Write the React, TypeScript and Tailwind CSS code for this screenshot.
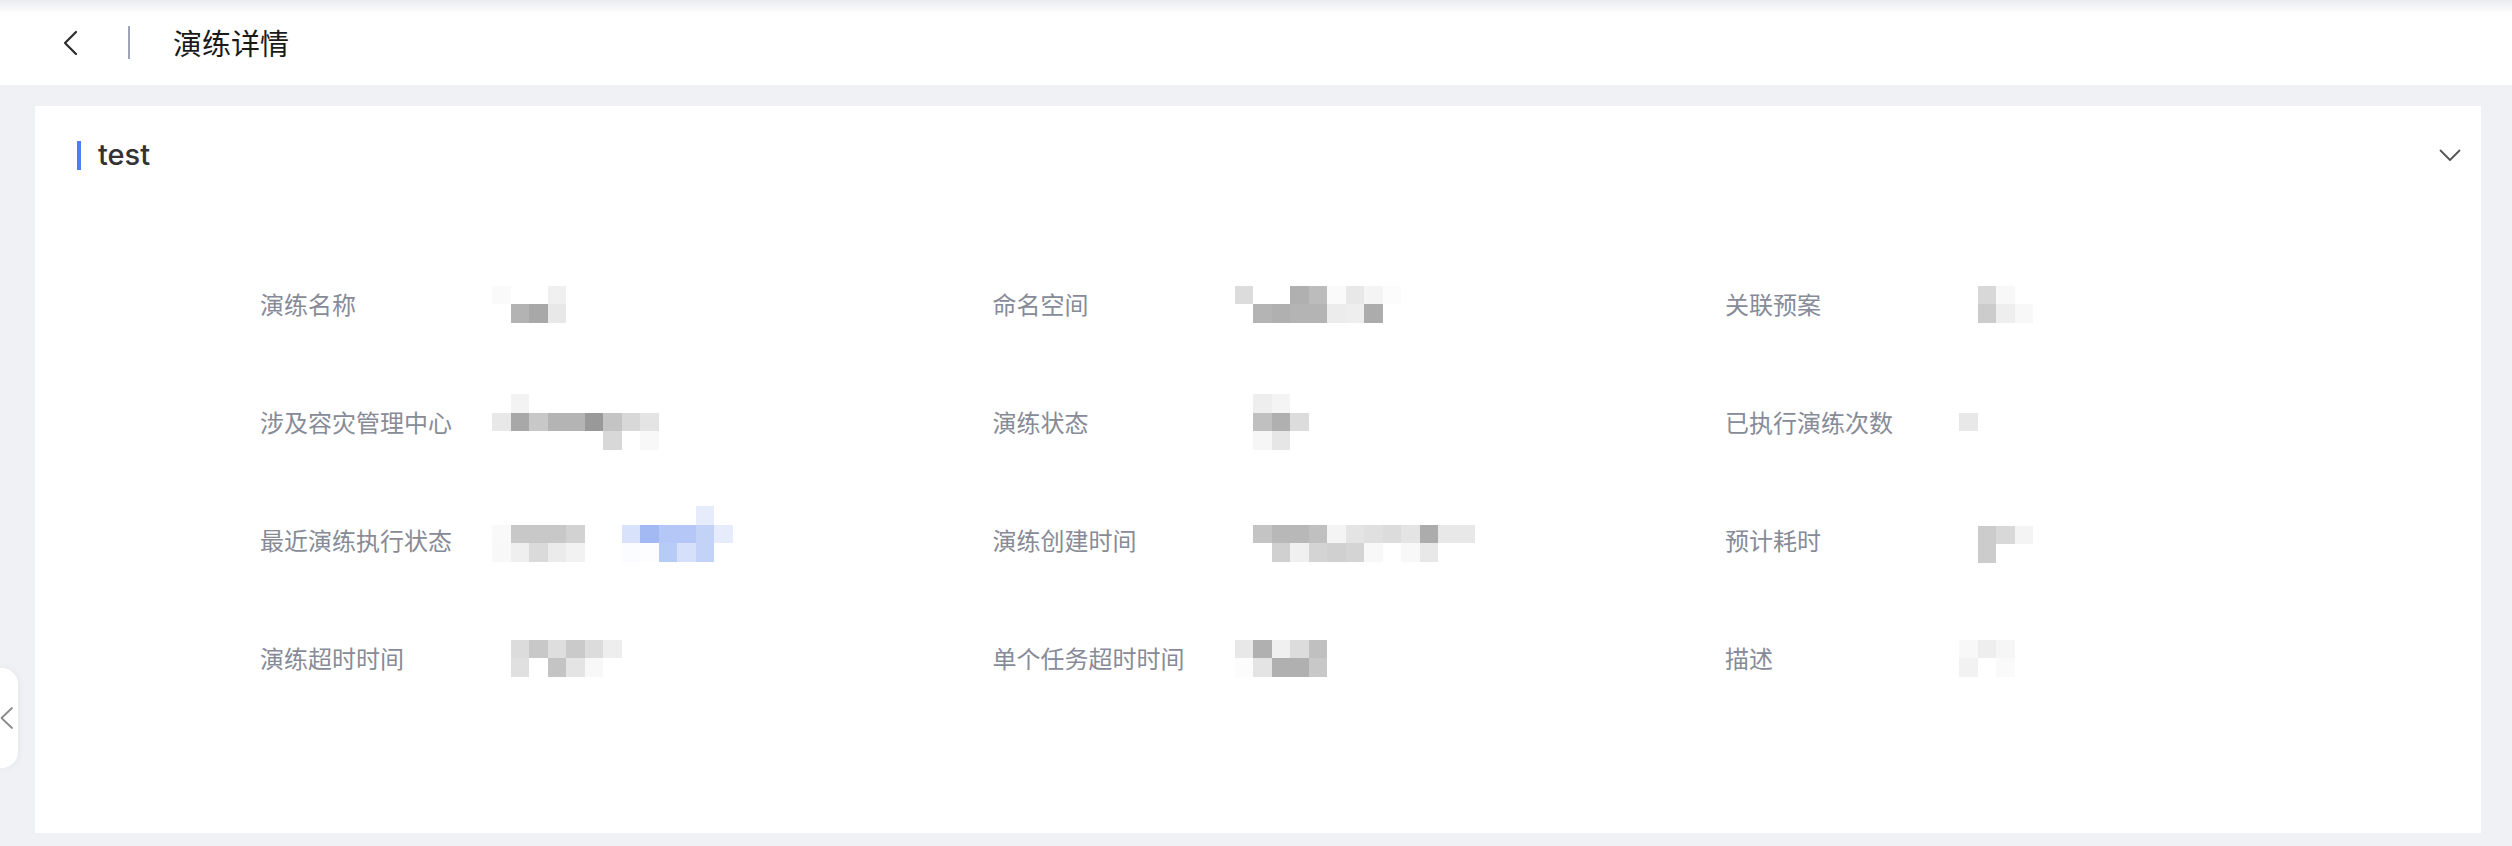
type Item = { label: string; shift: string; rows: string[][] };

const g = (v: string) => `#${v}${v}${v}`;

// mosaic blocks standing in for the redacted values
const items: Item[] = [
  {
    label: "演练名称",
    shift: "",
    rows: [
      [g("fa"), "", "", g("f0")],
      ["", g("b3"), g("a8"), g("e8")],
    ],
  },
  {
    label: "命名空间",
    shift: "ml-[10px]",
    rows: [
      [g("dc"), "", "", g("b0"), g("bc"), g("fa"), g("e8"), g("f4"), g("fc")],
      ["", g("b4"), g("b0"), g("b4"), g("b4"), g("ec"), g("ee"), g("ac")],
    ],
  },
  {
    label: "关联预案",
    shift: "ml-[2px]",
    rows: [
      ["", g("d8"), g("f8")],
      ["", g("cc"), g("ee"), g("f8")],
    ],
  },
  {
    label: "涉及容灾管理中心",
    shift: "",
    rows: [
      ["", g("f3")],
      [g("e8"), g("a8"), g("c8"), g("b4"), g("b4"), g("99"), g("c4"), g("d8"), g("e4")],
      ["", "", "", "", "", "", g("d8"), "", g("f8")],
    ],
  },
  {
    label: "演练状态",
    shift: "ml-[10px]",
    rows: [
      ["", g("ee"), g("f4")],
      ["", g("c0"), g("b0"), g("dc")],
      ["", g("f6"), g("e6")],
    ],
  },
  {
    label: "已执行演练次数",
    shift: "ml-[2px]",
    rows: [[g("e8")]],
  },
  {
    label: "最近演练执行状态",
    shift: "relative -top-[6px]",
    rows: [
      ["", "", "", "", "", "", "", "", "", "", "", "#e6ecfc"],
      [g("f9"), g("c8"), g("c8"), g("c8"), g("d2"), "", "", "#d9e2fb", "#a2b9f3", "#b5c7f6", "#b5c7f6", "#c3d2f7", "#e6ecfb"],
      [g("f8"), g("ef"), g("da"), g("eb"), g("f2"), "", "", "#fbfcff", "#fdfdff", "#b6cbf6", "#d6e0fa", "#c3d3f7"],
    ],
  },
  {
    label: "演练创建时间",
    shift: "ml-[10px] relative top-[3px]",
    rows: [
      ["", g("c4"), g("b8"), g("b8"), g("c0"), g("f4"), g("e4"), g("e0"), g("dc"), g("e4"), g("ac"), g("e8"), g("e8")],
      ["", "", g("d0"), g("f0"), g("d4"), g("d0"), g("d4"), g("f8"), "", g("f8"), g("e8")],
    ],
  },
  {
    label: "预计耗时",
    shift: "ml-[2px] relative top-[4px]",
    rows: [
      ["", g("cc"), g("d8"), g("f4")],
      ["", g("cc")],
    ],
  },
  {
    label: "演练超时时间",
    shift: "",
    rows: [
      ["", g("dc"), g("c8"), g("de"), g("ca"), g("dc"), g("ee")],
      ["", g("e0"), "", g("c4"), g("e4"), g("f8")],
    ],
  },
  {
    label: "单个任务超时时间",
    shift: "ml-[10px]",
    rows: [
      [g("e8"), g("b0"), g("f0"), g("dc"), g("c0")],
      [g("fc"), g("e4"), g("b0"), g("b0"), g("c8")],
    ],
  },
  {
    label: "描述",
    shift: "ml-[2px]",
    rows: [
      [g("f8"), g("ee"), g("f6")],
      [g("f2"), "", g("fa")],
    ],
  },
];

function Pixels({ rows }: { rows: string[][] }) {
  return (
    <div className="flex flex-col">
      {rows.map((row, i) => (
        <div key={i} className="flex">
          {row.map((c, j) => (
            <div key={j} className="w-[18.5px] h-[18.5px]" style={{ backgroundColor: c || "transparent" }} />
          ))}
        </div>
      ))}
    </div>
  );
}

export default function App() {
  return (
    <div className="relative w-full h-[846px] overflow-hidden bg-[#f0f1f5] font-['Noto_Sans_CJK_SC','Inter',sans-serif]">
      <header className="h-[85px] flex items-center bg-[linear-gradient(to_bottom,#ebecef,#ffffff_14px)]">
        <div className="ml-[60px] w-[20px] flex items-center justify-center">
          <svg width="18" height="26" viewBox="0 0 18 26" fill="none">
            <polyline points="15,2 4,13 15,24" stroke="#2b2b2b" strokeWidth="2.2" strokeLinecap="round" strokeLinejoin="round" />
          </svg>
        </div>
        <div className="ml-[48px] w-[2px] h-[33px] bg-[#9ea3b8]" />
        <h1 className="ml-[43px] text-[29px] leading-none text-[#1a1a1a]">演练详情</h1>
      </header>

      <section className="mt-[21px] ml-[35px] mr-[31px] h-[727px] bg-white">
        <div className="h-[98px] flex items-center pl-[42px] pr-[20px]">
          <div className="w-[4px] h-[29px] bg-[#4d7ff2]" />
          <span className="ml-[17px] font-['Inter',sans-serif] text-[29px] font-medium text-[#333333]">test</span>
          <svg className="ml-auto" width="22" height="13" viewBox="0 0 22 13" fill="none">
            <polyline points="1.5,1.5 11,11 20.5,1.5" stroke="#555555" strokeWidth="1.8" strokeLinecap="round" strokeLinejoin="round" />
          </svg>
        </div>

        <div className="pt-[41px] pl-[225px] grid grid-cols-[repeat(3,732.5px)]">
          {items.map((it) => (
            <div key={it.label} className="h-[118px] flex items-center">
              <div className="w-[232px] shrink-0 text-[24px] leading-none text-[#878b97]">{it.label}</div>
              <div className={it.shift}>
                <Pixels rows={it.rows} />
              </div>
            </div>
          ))}
        </div>
      </section>

      <div className="absolute left-0 top-[668px] w-[18px] h-[100px] bg-white rounded-r-[16px] shadow-[0_0_8px_rgba(0,0,0,0.06)] flex items-center">
        <svg width="14" height="24" viewBox="0 0 14 24" fill="none">
          <polyline points="12,2 1.5,12 12,22" stroke="#8a8a8a" strokeWidth="1.8" strokeLinecap="round" strokeLinejoin="round" />
        </svg>
      </div>
    </div>
  );
}
